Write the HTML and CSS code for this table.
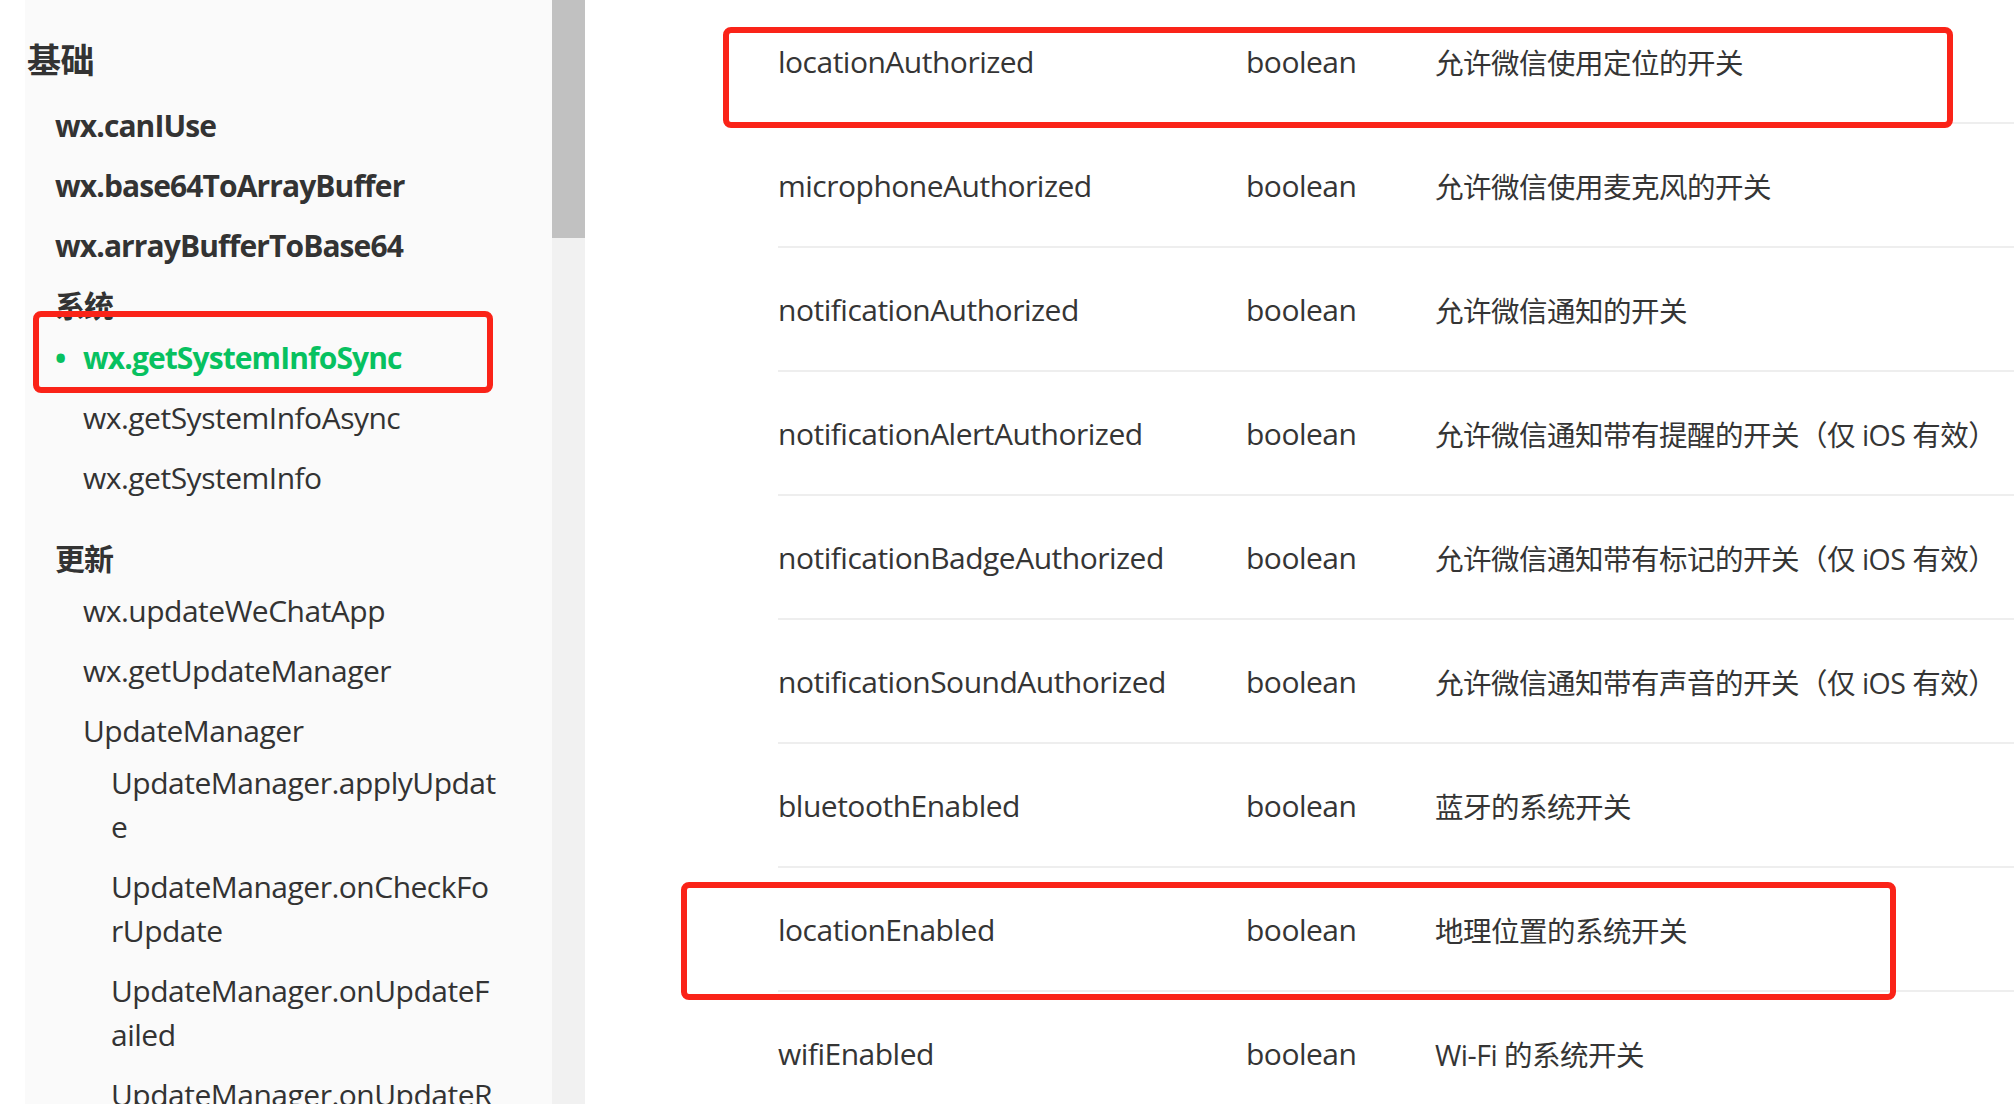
FILE: index.html
```html
<!DOCTYPE html>
<html lang="zh-CN">
<head>
    <meta charset="UTF-8">
    <meta name="viewport" content="width=device-width, initial-scale=1.0">
    <title>wx.getSystemInfoSync</title>
    <link rel="stylesheet" href="styles.css">
</head>
<body>
    <div class="page">
        <aside class="side">
            <h2 class="side-title">基础</h2>
            <ul class="menu">
                <li>wx.canIUse</li>
                <li>wx.base64ToArrayBuffer</li>
                <li>wx.arrayBufferToBase64</li>
                <li>系统
                    <ul>
                        <li class="active">wx.getSystemInfoSync</li>
                        <li>wx.getSystemInfoAsync</li>
                        <li>wx.getSystemInfo</li>
                    </ul>
                </li>
                <li class="gap">更新
                    <ul>
                        <li>wx.updateWeChatApp</li>
                        <li>wx.getUpdateManager</li>
                        <li>UpdateManager
                            <ul>
                                <li>UpdateManager.applyUpdate</li>
                                <li>UpdateManager.onCheckForUpdate</li>
                                <li>UpdateManager.onUpdateFailed</li>
                                <li>UpdateManager.onUpdateReady</li>
                            </ul>
                        </li>
                    </ul>
                </li>
            </ul>
        </aside>
        <div class="scrollbar"><div class="thumb"></div></div>
        <main class="content">
            <div class="table">
                <div class="row"><span>locationAuthorized</span><span>boolean</span><span class="desc">允许微信使用定位的开关</span></div>
                <div class="row"><span>microphoneAuthorized</span><span>boolean</span><span class="desc">允许微信使用麦克风的开关</span></div>
                <div class="row"><span>notificationAuthorized</span><span>boolean</span><span class="desc">允许微信通知的开关</span></div>
                <div class="row"><span>notificationAlertAuthorized</span><span>boolean</span><span class="desc">允许微信通知带有提醒的开关（仅 iOS 有效）</span></div>
                <div class="row"><span>notificationBadgeAuthorized</span><span>boolean</span><span class="desc">允许微信通知带有标记的开关（仅 iOS 有效）</span></div>
                <div class="row"><span>notificationSoundAuthorized</span><span>boolean</span><span class="desc">允许微信通知带有声音的开关（仅 iOS 有效）</span></div>
                <div class="row"><span>bluetoothEnabled</span><span>boolean</span><span class="desc">蓝牙的系统开关</span></div>
                <div class="row"><span>locationEnabled</span><span>boolean</span><span class="desc">地理位置的系统开关</span></div>
                <div class="row"><span>wifiEnabled</span><span>boolean</span><span class="desc">Wi-Fi 的系统开关</span></div>
            </div>
        </main>

        <!-- 标注框 -->
        <div class="mark mark-side"></div>
        <div class="mark mark-top"></div>
        <div class="mark mark-bottom"></div>
    </div>
</body>
</html>
```

FILE: styles.css
```css
*{margin:0;padding:0;box-sizing:border-box;}
li{list-style:none;}
body{font-family:"Open Sans","Noto Sans CJK SC",sans-serif;color:#353535;background:#fff;overflow:hidden;}

.page{display:flex;height:1104px;position:relative;overflow:hidden;}

.side{width:527px;flex-shrink:0;margin-left:25px;background:#fafafa;padding:30px 54px 0 2px;font-size:30px;letter-spacing:-0.5px;}
.side-title{font-size:34px;line-height:60px;margin-bottom:6px;font-weight:bold;color:#333;}
.menu{padding-left:28px;}
.menu ul{padding-left:28px;}
.menu li{padding:8px 0;line-height:44px;word-break:break-all;}
.menu > li{font-weight:bold;color:#333;letter-spacing:-0.9px;}
.menu ul li{font-weight:normal;letter-spacing:-0.5px;}
.menu li.gap{margin-top:13px;}
.menu li.active{color:#07c160;font-weight:bold;letter-spacing:-0.9px;}
.menu li.active::before{content:"•";display:inline-block;width:28px;margin-left:-28px;}

.scrollbar{width:33px;background:#f1f1f1;flex-shrink:0;}
.scrollbar .thumb{height:238px;background:#c1c1c1;}

.content{flex:1;min-width:0;padding-left:193px;font-size:30px;letter-spacing:-0.5px;}
.row{display:grid;grid-template-columns:468px 189px 1fr;align-items:center;height:124px;border-bottom:2px solid #eeeeee;white-space:nowrap;}
.row .desc{font-size:28.5px;}

.mark{position:absolute;border:6px solid #fa2318;border-radius:8px;}
.mark-side{left:33px;top:311px;width:460px;height:82px;}
.mark-top{left:723px;top:27px;width:1230px;height:101px;}
.mark-bottom{left:681px;top:882px;width:1215px;height:118px;}
```
